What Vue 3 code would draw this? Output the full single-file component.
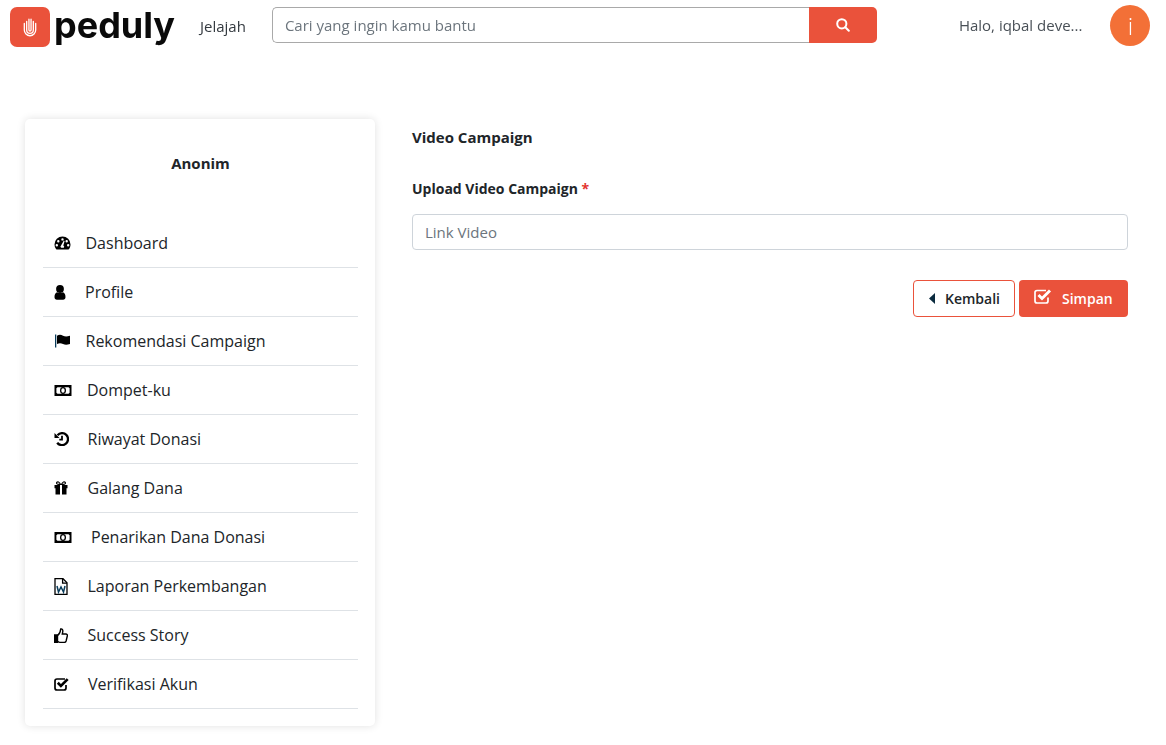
<script setup>
const menu = [
  { label: "Dashboard", icon: "gauge", gap: 19.5 },
  { label: "Profile", icon: "user", gap: 19 },
  { label: "Rekomendasi Campaign", icon: "flag", gap: 19.5 },
  { label: "Dompet-ku", icon: "money", gap: 21 },
  { label: "Riwayat Donasi", icon: "history", gap: 21.5 },
  { label: "Galang Dana", icon: "gift", gap: 21.5 },
  { label: "Penarikan Dana Donasi", icon: "money", gap: 25 },
  { label: "Laporan Perkembangan", icon: "word", gap: 21.5 },
  { label: "Success Story", icon: "thumb", gap: 21.5 },
  { label: "Verifikasi Akun", icon: "check", gap: 22 },
];
</script>

<template>
  <div class="page">
    <header class="navbar">
      <div class="logo">
        <span class="logo-mark">
          <svg width="14" height="20" viewBox="0 0 16 22" fill="none" stroke="#fff" stroke-width="1.5" stroke-linecap="round">
            <path d="M1.5 7v7.5a6.5 6.5 0 0 0 13 0V7" />
            <path d="M4.2 4.500v10a3.800 3.800 0 0 0 7.600 0v-10" />
            <path d="M6.800 2v12.500a1.200 1.200 0 0 0 2.400 0V2" />
          </svg>
        </span>
        <span class="logo-text">peduly</span>
      </div>
      <a class="nav-link">Jelajah</a>
      <div class="search">
        <input class="search-input" placeholder="Cari yang ingin kamu bantu" />
        <button class="search-btn">
          <svg width="14" height="14" viewBox="0 0 14 14" fill="none" stroke="#fff" stroke-width="2" stroke-linecap="round">
            <circle cx="5.800" cy="5.800" r="4.600" />
            <path d="M9.300 9.300 12.800 12.800" />
          </svg>
        </button>
      </div>
      <span class="greeting">Halo, iqbal deve...</span>
      <span class="avatar">i</span>
    </header>

    <main class="content">
      <aside class="sidebar">
        <h6 class="name">Anonim</h6>
        <ul class="menu">
          <li v-for="item in menu" :key="item.label" class="menu-item">
            <span class="menu-icon">
              <svg v-if="item.icon === 'gauge'" width="17" height="14" viewBox="0 0 17 14">
                <path fill-rule="evenodd" d="M8.500 0.500a8 8 0 0 1 8 8c0 1.900-.6 3.500-1.500 4.600l-.5.400h-12l-.5-.4A7.600 7.600 0 0 1 .5 8.500a8 8 0 0 1 8-8zM8.500 2.200a1.200 1.200 0 1 0 0 2.400 1.200 1.200 0 0 0 0-2.400zM4.300 4a1.200 1.200 0 1 0 0 2.400 1.200 1.200 0 0 0 0-2.400zM12.700 4a1.200 1.200 0 1 0 0 2.400 1.200 1.200 0 0 0 0-2.400zM2.800 8a1.200 1.200 0 1 0 0 2.400 1.200 1.200 0 0 0 0-2.400zM14.200 8a1.200 1.200 0 1 0 0 2.400 1.200 1.200 0 0 0 0-2.400zM7.200 9.300l-.8 1.500.8 1h2.600l.4-1.300-.9-1.100 1.300-4.400-.9-.2z" />
              </svg>
              <svg v-else-if="item.icon === 'user'" width="12" height="15" viewBox="0 0 12 15">
                <circle cx="6" cy="4" r="3.900" />
                <path d="M0.500 12c0-3 1.200-4.500 2.600-4.800 1.700 1.200 4.100 1.200 5.800 0 1.400.3 2.600 1.800 2.600 4.800 0 1.800-1 2.700-2.400 2.700H2.900C1.500 14.700.5 13.800.5 12z" />
              </svg>
              <svg v-else-if="item.icon === 'flag'" width="17" height="14" viewBox="0 0 17 14">
                <path d="M1 .5h1.300v13H1z" fill="#0b3d5c" />
                <path d="M3 1.700c2-1.200 4-1.200 6 0 2 .9 4 .9 7 0v8.300c-3 1-5 1-7 0-2-1.100-4-1.100-6 0z" />
              </svg>
              <svg v-else-if="item.icon === 'money'" width="18" height="13" viewBox="0 0 18 13">
                <path fill-rule="evenodd" d="M.5 1h17v11H.5zM3.500 3.200 2.400 4.300v4.400l1.100 1.100h11l1.100-1.100V4.300l-1.100-1.100z" />
                <path d="M6 6.500a3 3.400 0 1 1 6 0 3 3.400 0 1 1-6 0zM7.300 6.500a1.700 2.300 0 1 0 3.400 0 1.700 2.300 0 1 0-3.400 0z" fill-rule="evenodd" />
              </svg>
              <svg v-else-if="item.icon === 'history'" width="15" height="14" viewBox="0 0 15 14" fill="none" stroke="#000" stroke-width="2.300">
                <path d="M3.500 3.200A6 6 0 1 1 3.200 10.700" />
                <path d="M.5 1v5h5z" fill="#000" stroke="none" />
                <path d="M8 3.800v3.900H5.300" stroke-width="1.800" />
              </svg>
              <svg v-else-if="item.icon === 'gift'" width="14" height="14" viewBox="0 0 14 14">
                <path fill-rule="evenodd" d="M.5 4h4.200C2.800 3.800 2 3 2 2c0-1 .8-1.800 1.800-1.800 1.300 0 2.400 1.400 3.200 3 .8-1.600 1.900-3 3.200-3C11.200.2 12 1 12 2c0 1-.8 1.800-2.700 2h4.200v3.200h-1v6.300h-11V7.200h-1zM3.800 1.400a.7.7 0 0 0 0 1.400h1.900c-.7-1-1.300-1.400-1.900-1.400zM10.200 1.400c-.6 0-1.200.4-1.900 1.400h1.900a.7.7 0 0 0 0-1.400zM6 4v9.500h2V4z" />
              </svg>
              <svg v-else-if="item.icon === 'word'" width="14" height="17" viewBox="0 0 14 17" fill="none" stroke="#000" stroke-width="1.300">
                <path d="M1 .7h8l4 4v11.600H1z" />
                <path d="M8.600 .7v4.400H13" />
                <path d="M3 8l1.500 6 2.500-5 2.500 5L11 8" stroke-width="1.500" stroke="#0b3d5c" />
              </svg>
              <svg v-else-if="item.icon === 'thumb'" width="14" height="15" viewBox="0 0 14 15" fill="none" stroke="#000" stroke-width="1.400">
                <path d="M.7 7h2.800v7.300H.7z" fill="#000" />
                <path d="M3.600 7.500C5.500 6 6.500 4.500 6.700 1c1.400-.5 2.300.8 2.100 2.500L8.300 6h3.500c1.300 0 1.800 1 1.500 2l-1.200 5c-.3 1-.9 1.400-1.900 1.400H6.500c-1.200 0-2-.6-2.900-.9" />
              </svg>
              <svg v-else width="15" height="14" viewBox="0 0 15 14" fill="none" stroke="#000">
                <path d="M12 8v3a2 2 0 0 1-2 2H3a2 2 0 0 1-2-2V4a2 2 0 0 1 2-2h8" stroke-width="1.700" />
                <path d="M3.800 5.800 6.900 8.900 13.700 2.100" stroke-width="2.700" />
              </svg>
            </span>
            <span class="menu-label" :style="{ marginLeft: item.gap + 'px' }">{{ item.label }}</span>
          </li>
        </ul>
      </aside>

      <section class="form">
        <h6 class="title">Video Campaign</h6>
        <label class="field-label">Upload Video Campaign <span class="req">*</span></label>
        <input class="field" placeholder="Link Video" />
        <div class="actions">
          <button class="btn btn-outline">
            <svg width="7" height="11" viewBox="0 0 7 11"><path d="M6 0v11L0 5.500z" fill="#0b2b3f" /></svg>
            Kembali
          </button>
          <button class="btn btn-solid">
            <svg class="btn-check" width="18" height="15" viewBox="0 0 18 15" fill="none" stroke="#fff">
              <path d="M14 8.500V12a2 2 0 0 1-2 2H3a2 2 0 0 1-2-2V3.500a2 2 0 0 1 2-2h9" stroke-width="1.700" />
              <path d="M4.500 6 8 9.500 16 1.500" stroke-width="2.900" />
            </svg>
            Simpan
          </button>
        </div>
      </section>
    </main>
  </div>
</template>

<style scoped>
.page {
  width: 1166px;
  height: 745px;
  overflow: hidden;
  background: #fff;
  font-family: "Open Sans", sans-serif;
  color: #212529;
}
.navbar {
  display: flex;
  align-items: flex-start;
  height: 54px;
  will-change: transform;
}
.logo {
  display: flex;
  align-items: center;
  margin: 7px 0 0 10px;
  height: 40px;
}
.logo-mark {
  display: flex;
  align-items: center;
  justify-content: center;
  width: 40px;
  height: 40px;
  border-radius: 7px;
  background: #ea523b;
}
.logo-text {
  width: 119px;
  margin: -4px 0 0 4px;
  font-family: Inter, sans-serif;
  font-weight: 700;
  font-size: 36px;
  line-height: 40px;
  color: #0a0a0a;
}
.nav-link {
  margin: 16px 0 0 27px;
  font-size: 15px;
  line-height: 20px;
  color: #343a40;
}
.search {
  display: flex;
  width: 605px;
  height: 36px;
  margin: 7px 0 0 26px;
}
.search-input {
  flex: 1;
  min-width: 0;
  padding: 0 12px;
  border: 1px solid #a9a9a9;
  border-right: 0;
  border-radius: 5px 0 0 5px;
  font: 15px "Open Sans", sans-serif;
  outline: none;
}
.search-input::placeholder {
  color: #6c757d;
}
.search-btn {
  display: flex;
  align-items: center;
  justify-content: center;
  width: 68px;
  padding: 0;
  border: 0;
  border-radius: 0 5px 5px 0;
  background: #ea523b;
}
.greeting {
  margin: 15px 0 0 82px;
  width: 151px;
  font-size: 15px;
  line-height: 20px;
  color: #495057;
}
.avatar {
  display: flex;
  align-items: center;
  justify-content: center;
  width: 40px;
  height: 41px;
  margin-top: 5px;
  padding-left: 1px;
  box-sizing: border-box;
  border-radius: 50%;
  background: #f37037;
  color: #fff;
  font-size: 24px;
  font-weight: 300;
}
.content {
  display: flex;
  align-items: flex-start;
  padding: 65px 38px 0 25px;
}
.sidebar {
  width: 350px;
  height: 607px;
  flex: none;
  box-sizing: border-box;
  padding: 0 17px 0 18px;
  border-radius: 5px;
  background: #fff;
  box-shadow: 0 0 8px rgba(0, 0, 0, 0.12);
}
.name {
  margin: 0;
  padding-top: 34px;
  height: 100px;
  box-sizing: border-box;
  text-align: center;
  font-size: 15px;
  line-height: 20px;
  font-weight: 700;
}
.menu {
  margin: 0;
  padding: 0;
  list-style: none;
}
.menu-item {
  display: flex;
  align-items: center;
  height: 49px;
  box-sizing: border-box;
  padding-left: 11px;
  border-bottom: 1px solid #dee2e6;
  font-size: 16px;
  color: #212529;
}
.menu-icon {
  display: flex;
  align-items: center;
  width: 18px;
  height: 18px;
  flex: none;
  margin-right: -6px;
}
.form {
  flex: 1;
  margin-left: 37px;
}
.title {
  margin: 0;
  padding-top: 8px;
  font-size: 15px;
  line-height: 20px;
  font-weight: 700;
}
.field-label {
  display: block;
  margin-top: 32px;
  font-size: 14px;
  line-height: 20px;
  font-weight: 700;
}
.req {
  color: #e3342f;
}
.field {
  display: block;
  box-sizing: border-box;
  width: 100%;
  height: 36px;
  margin-top: 15px;
  padding: 0 12px;
  border: 1px solid #ced4da;
  border-radius: 4px;
  font: 15px "Open Sans", sans-serif;
  outline: none;
}
.field::placeholder {
  color: #6c757d;
}
.actions {
  display: flex;
  justify-content: flex-end;
  gap: 4px;
  margin-top: 30px;
}
.btn {
  display: flex;
  align-items: center;
  height: 37px;
  box-sizing: border-box;
  border-radius: 4px;
  font: 600 14px "Open Sans", sans-serif;
}
.btn-outline {
  width: 102px;
  padding: 0 0 0 15px;
  gap: 9px;
  border: 1px solid #ea523b;
  background: #fff;
  color: #212529;
}
.btn-solid {
  width: 109px;
  padding: 0 0 0 15px;
  gap: 10px;
  border: 0;
  background: #ea523b;
  color: #fff;
}
.btn-check {
  margin-top: -4px;
}
</style>
